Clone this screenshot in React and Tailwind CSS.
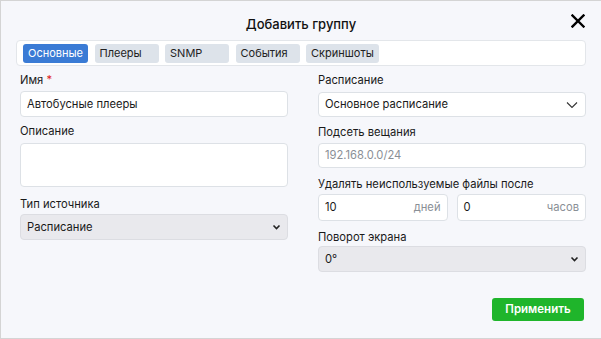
import React from 'react';

const tabs = ['Основные', 'Плееры', 'SNMP', 'События', 'Скриншоты'];

const Chevron = ({ small }) =>
  small ? (
    <svg width="9" height="6" viewBox="0 0 9 6" className="absolute right-[6px] top-1/2 -translate-y-1/2">
      <path d="M1.5 1.5 L4.5 4.5 L7.5 1.5" fill="none" stroke="#222" strokeWidth="1.6" />
    </svg>
  ) : (
    <svg width="12" height="7" viewBox="0 0 12 7" className="absolute right-[7px] top-1/2 -translate-y-1/2">
      <path d="M1 1 L6 6 L11 1" fill="none" stroke="#333" strokeWidth="1.1" />
    </svg>
  );

const Label = ({ children, className = '' }) => (
  <div className={`text-[11.2px] leading-[16px] text-[#1a1a1a] ${className}`}>{children}</div>
);

const Field = ({ children, className = '' }) => (
  <div
    className={`relative flex items-center bg-white border border-[#dde1e6] rounded-[4px] px-[6px] text-[11.2px] text-[#1a1a1a] ${className}`}
  >
    {children}
  </div>
);

const GraySelect = ({ value, className = '' }) => (
  <div
    className={`relative flex items-center bg-[#e9e9ed] border border-[#dcdde2] rounded-[4px] px-[6px] text-[11.2px] text-[#1a1a1a] ${className}`}
  >
    {value}
    <Chevron small />
  </div>
);

export default function App() {
  return (
    <div
      className="w-[601px] h-[339px] bg-[#f6f7fb] border-l border-t border-b border-[#d4d4d4] flex flex-col"
      style={{ fontFamily: 'Inter, "Noto Sans", sans-serif' }}
    >
      <div className="relative h-[39px] flex items-center justify-center pt-[8px]">
        <span className="text-[13px] font-medium text-[#111]">Добавить группу</span>
        <svg width="14" height="14" viewBox="0 0 14 14" className="absolute right-[16px] top-[13px]">
          <path d="M1.5 1.5 L12.5 12.5 M12.5 1.5 L1.5 12.5" stroke="#000" strokeWidth="2.4" strokeLinecap="square" />
        </svg>
      </div>

      <div className="mx-[15px] h-[26px] bg-white border border-[#e3e6ea] rounded-[4px] flex items-center gap-[6.5px] px-[6px]">
        {tabs.map((t, i) => (
          <div
            key={t}
            className={`h-[19px] min-w-[64px] px-[5px] rounded-[3px] flex items-center text-[11px] ${
              i === 0 ? 'bg-[#3a7bd5] text-white' : 'bg-[#dde3ea] text-[#222]'
            }`}
          >
            {t}
          </div>
        ))}
      </div>

      <div className="flex pl-[19px] pr-[14px] gap-[30px] mt-[6px]">
        <div className="flex flex-col w-[268px]">
          <Label>
            Имя <span className="text-[#e02020]">*</span>
          </Label>
          <Field className="h-[26px] mt-[3px]">Автобусные плееры</Field>
          <Label className="mt-[6px]">Описание</Label>
          <Field className="h-[44px] mt-[4px]" />
          <Label className="mt-[9px]">Тип источника</Label>
          <GraySelect value="Расписание" className="h-[26px] mt-[2px]" />
        </div>

        <div className="flex flex-col w-[268px]">
          <Label>Расписание</Label>
          <Field className="h-[25px] mt-[4px]">
            Основное расписание
            <Chevron />
          </Field>
          <Label className="mt-[7px]">Подсеть вещания</Label>
          <Field className="h-[25px] mt-[3px] text-[#8a8f96]">192.168.0.0/24</Field>
          <Label className="mt-[8px]">Удалять неиспользуемые файлы после</Label>
          <div className="flex gap-[9px] mt-[2px]">
            <Field className="h-[27px] flex-1 justify-between">
              <span>10</span>
              <span className="text-[#8a8f96]">дней</span>
            </Field>
            <Field className="h-[27px] flex-1 justify-between">
              <span>0</span>
              <span className="text-[#8a8f96]">часов</span>
            </Field>
          </div>
          <Label className="mt-[8px]">Поворот экрана</Label>
          <GraySelect value="0°" className="h-[26px] mt-[1px]" />
          <div className="flex justify-end mt-[26px] pr-[2px]">
            <button className="h-[23px] w-[92px] bg-[#1fb52b] rounded-[3px] text-white text-[11.5px] font-semibold">
              Применить
            </button>
          </div>
        </div>
      </div>
    </div>
  );
}
